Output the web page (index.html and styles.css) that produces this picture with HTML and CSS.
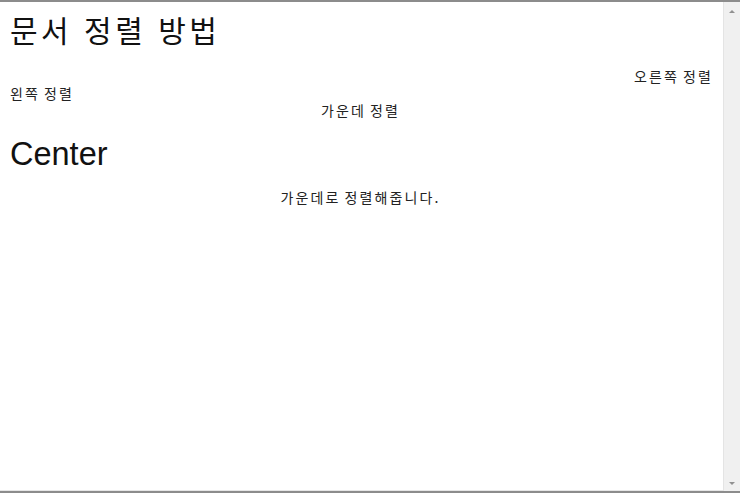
FILE: index.html
```html
<!DOCTYPE html>
<html lang="ko">
<head>
<meta charset="utf-8">
<title>문서 정렬 방법</title>
<link rel="stylesheet" href="styles.css">
</head>
<body>
<div class="frame">
  <div class="content">
    <h1 class="title">문서 정렬 방법</h1>
    <p class="line right">오른쪽 정렬</p>
    <p class="line left">왼쪽 정렬</p>
    <p class="line center">가운데 정렬</p>
    <h2 class="heading">Center</h2>
    <p class="line center para">가운데로 정렬해줍니다.</p>
  </div>
  <div class="scrollbar">
    <span class="arrow up"></span>
    <span class="arrow down"></span>
  </div>
</div>
</body>
</html>
```
FILE: styles.css
```css
html, body {
  margin: 0;
  padding: 0;
  background: #ffffff;
}
body {
  font-family: "Noto Sans CJK KR", "Noto Sans", sans-serif;
  color: #111;
}
.frame {
  display: flex;
  width: 740px;
  height: 493px;
  box-sizing: border-box;
  border-top: 2px solid #8c8c8c;
  border-bottom: 2px solid #8c8c8c;
}
.content {
  flex: 1;
  padding: 0 12px 0 10px;
  box-sizing: border-box;
  border-bottom: 1px solid #e6e6e6;
}
.title {
  margin: 7px 0 0 0;
  font-size: 30px;
  font-weight: normal;
  line-height: 40px;
  letter-spacing: 3.5px;
}
.line {
  margin: 0;
  font-size: 14px;
  line-height: 17px;
  letter-spacing: 2.1px;
  word-spacing: -2px;
  color: #222;
}
.right { text-align: right; margin-top: 19px; margin-right: -2px; }
.left { text-align: left; }
.center { text-align: center; }
.heading {
  margin: 17px 0 0 0;
  font-family: "Liberation Sans", Arial, sans-serif;
  font-weight: normal;
  font-size: 32.5px;
  line-height: 36px;
}
.para { margin-top: 17px; }
.scrollbar {
  width: 17px;
  background: #f0f0f0;
  border-left: 1px solid #e4e4e4;
  display: flex;
  flex-direction: column;
  justify-content: space-between;
  align-items: center;
  padding: 8px 0 6px;
  box-sizing: border-box;
}
.arrow {
  width: 0;
  height: 0;
  border-left: 3px solid transparent;
  border-right: 3px solid transparent;
}
.up { border-bottom: 3px solid #909090; }
.down { border-top: 3px solid #909090; }
```
